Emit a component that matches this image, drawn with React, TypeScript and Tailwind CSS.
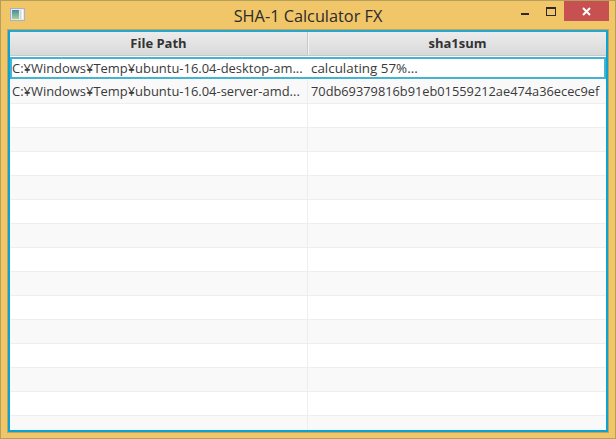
const font = "[font-family:'Open_Sans','Noto_Sans',sans-serif]";

const rows = Array.from({ length: 14 }, (_, i) => i);

const AppIcon = () => (
  <div className="flex h-[13px] w-[15px] border border-[#a9b1c4] bg-[#e8e8e8] p-px">
    <div className="h-full w-[7px] bg-gradient-to-b from-[#3f8f9f] to-[#a8cf98]" />
    <div className="ml-px h-full flex-1 bg-[#cfd8de]" />
    <div className="ml-px h-full w-px bg-white" />
  </div>
);

const WindowButtons = () => (
  <div className="flex items-start">
    <div className="flex h-[21px] w-[27px] items-end justify-center pb-[7px]">
      <div className="h-[2px] w-[8px] bg-[#2a2a2a]" />
    </div>
    <div className="flex h-[21px] w-[26px] items-center justify-center">
      <div className="h-[9px] w-[10px] border border-t-2 border-[#2a2a2a]" />
    </div>
    <div className="flex h-[20px] w-[45px] items-center justify-center bg-[#c75050]">
      <svg width="9" height="9" viewBox="0 0 9 9">
        <path d="M1 1L8 8M8 1L1 8" stroke="#fff" strokeWidth="2" />
      </svg>
    </div>
  </div>
);

export default function App() {
  return (
    <div className={`flex h-[439px] w-[616px] flex-col border border-[#b59f5d] bg-[#f0c669] ${font}`}>
      <div className="relative flex h-[28px] shrink-0 items-start justify-between pl-[9px] pr-[6px]">
        <div className="pt-[7px]">
          <AppIcon />
        </div>
        <div className="absolute inset-x-0 top-[5px] text-center text-[16.3px] leading-[20px] text-[#2b2b2b]">
          SHA-1 Calculator FX
        </div>
        <WindowButtons />
      </div>
      <div className="mx-[6px] mb-[5px] flex min-h-0 flex-1 flex-col border border-[#b9a566]">
        <div className="flex min-h-0 flex-1 flex-col overflow-hidden border-2 border-[#0aa3d4] border-t-[#2aa6c9] bg-white">
          <div className="flex h-[24px] shrink-0 border-b border-[#c8c8c8] bg-gradient-to-b from-[#ececec] to-[#d9d9d9] text-[13px] font-bold leading-[23px] text-[#333]">
            <div className="w-[298px] border-r border-[#c8c8c8] text-center">File Path</div>
            <div className="flex-1 border-l border-[#f3f3f3] text-center">sha1sum</div>
          </div>
          <div className="my-px flex h-[22px] shrink-0 border-2 border-[#45b3d3] bg-white text-[12.8px] leading-[18px] text-[#3a3a3a]">
            <div className="w-[296px] truncate text-[12.95px]">C:¥Windows¥Temp¥ubuntu-16.04-desktop-am...</div>
            <div className="flex-1 pl-[3px] text-[13.4px]">calculating 57%...</div>
          </div>
          <div className="flex h-[24px] shrink-0 border-b border-[#eeeeee] bg-[#f9f9f9] text-[12.8px] leading-[23px] text-[#3a3a3a]">
            <div className="w-[298px] truncate border-r border-[#eeeeee] pl-[2px] text-[12.95px]">C:¥Windows¥Temp¥ubuntu-16.04-server-amd...</div>
            <div className="flex-1 truncate pl-[3px]">70db69379816b91eb01559212ae474a36ecec9ef</div>
          </div>
          {rows.map((i) => (
            <div
              key={i}
              className={`flex h-[24px] shrink-0 border-b border-[#eeeeee] ${i % 2 === 0 ? "bg-white" : "bg-[#f9f9f9]"}`}
            >
              <div className="w-[298px] border-r border-[#eeeeee]" />
              <div className="flex-1" />
            </div>
          ))}
        </div>
      </div>
    </div>
  );
}
